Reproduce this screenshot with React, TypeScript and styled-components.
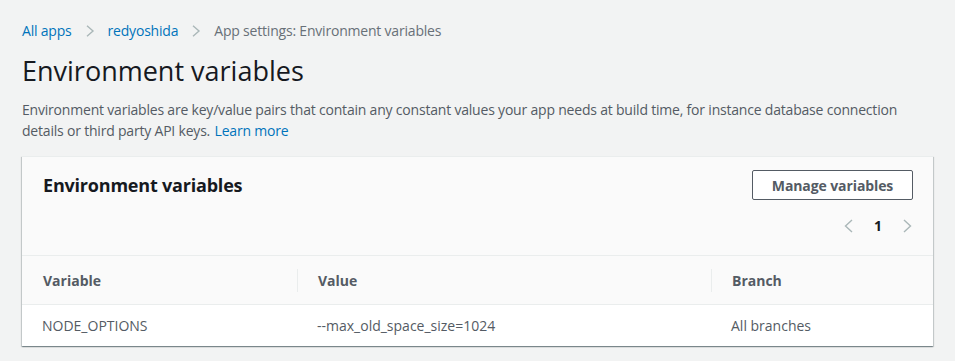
import React from "react";
import styled, { createGlobalStyle } from "styled-components";

const Global = createGlobalStyle`
  html, body { margin: 0; padding: 0; background: #f2f3f3; }
  body { font-family: "Open Sans", "Liberation Sans", Arial, sans-serif; -webkit-font-smoothing: antialiased; }
  * { box-sizing: border-box; }
`;

const Page = styled.div`
  padding: 21px 22px 14px 22px;
  background: #f2f3f3;
  min-height: 361px;
`;

const Breadcrumbs = styled.nav`
  display: flex;
  align-items: center;
  gap: 13px;
  font-size: 14px;
  line-height: 20px;
  height: 20px;
  letter-spacing: -0.2px;
`;

const Crumb = styled.a<{ $current?: boolean }>`
  color: ${(p) => (p.$current ? "#687078" : "#0073bb")};
  text-decoration: none;
`;

const Chev = styled.svg<{ $big?: boolean }>`
  width: 10px;
  height: ${(p) => (p.$big ? 14 : 12)}px;
  display: block;
  flex: none;
`;

const Title = styled.h1`
  margin: 12px 0 10px;
  font-size: 27px;
  line-height: 36px;
  font-weight: 400;
  color: #16191f;
`;

const Desc = styled.p`
  margin: 0;
  font-size: 14px;
  line-height: 21px;
  color: #545b64;
  letter-spacing: -0.2px;
`;

const Link = styled.a`
  color: #0073bb;
  text-decoration: none;
  margin-left: 1px;
`;

const Card = styled.section`
  margin-top: 15px;
  background: #ffffff;
  box-shadow: 0 1px 1px 0 rgba(0, 28, 36, 0.3), 1px 1px 1px 0 rgba(0, 28, 36, 0.15),
    -1px 1px 1px 0 rgba(0, 28, 36, 0.15);
  border-top: 1px solid #eaeded;
`;

const CardHeader = styled.div`
  background: #fafafa;
  padding: 13px 20px 19px 21px;
  display: grid;
  grid-template-columns: 1fr auto;
  row-gap: 16px;
  align-items: center;
`;

const CardTitle = styled.h2`
  margin: 0;
  font-size: 18px;
  line-height: 24px;
  font-weight: 700;
  color: #16191f;
  letter-spacing: -0.2px;
`;

const Button = styled.button`
  height: 30px;
  width: 161px;
  border: 1px solid #545b64;
  border-radius: 2px;
  background: #ffffff;
  color: #545b64;
  font-family: inherit;
  font-size: 14px;
  font-weight: 700;
  padding: 0;
  white-space: nowrap;
  letter-spacing: -0.1px;
  cursor: pointer;
`;

const Pagination = styled.div`
  grid-column: 2;
  justify-self: end;
  display: flex;
  align-items: center;
  gap: 20px;
  height: 20px;
  padding-right: 1px;
`;

const PageNum = styled.span`
  font-size: 14px;
  font-weight: 700;
  color: #16191f;
  line-height: 20px;
`;

const Table = styled.table`
  width: 100%;
  border-collapse: collapse;
  table-layout: fixed;
`;

const Th = styled.th<{ $sep?: boolean }>`
  position: relative;
  text-align: left;
  background: #fafafa;
  border-top: 1px solid #eaeded;
  height: 49px;
  padding: 0 20px 0 21px;
  font-size: 14px;
  font-weight: 700;
  color: #545b64;
  &::before {
    content: "";
    display: ${(p) => (p.$sep ? "block" : "none")};
    position: absolute;
    left: 0;
    top: 13px;
    bottom: 12px;
    width: 1px;
    background: #eaeded;
  }
`;

const Td = styled.td`
  border-top: 1px solid #eaeded;
  height: 41px;
  padding: 0 20px 0 20px;
  font-size: 14px;
  color: #545b64;
  background: #ffffff;
`;

const ChevronRight = ({ big }: { big?: boolean }) => (
  <Chev $big={big} viewBox={big ? "0 0 10 14" : "0 0 10 12"} fill="none">
    <path d={big ? "M2 1 L8.5 7 L2 13" : "M2 0.8 L8 6 L2 11.2"} stroke="#aab7b8" strokeWidth="1.4" />
  </Chev>
);

const ChevronLeft = ({ big }: { big?: boolean }) => (
  <Chev $big={big} viewBox={big ? "0 0 10 14" : "0 0 10 12"} fill="none">
    <path d={big ? "M8 1 L1.5 7 L8 13" : "M8 0.8 L2 6 L8 11.2"} stroke="#aab7b8" strokeWidth="1.4" />
  </Chev>
);

export default function App() {
  return (
    <>
      <Global />
      <Page>
        <Breadcrumbs>
          <Crumb href="#">All apps</Crumb>
          <ChevronRight />
          <Crumb href="#">redyoshida</Crumb>
          <ChevronRight />
          <Crumb $current>App settings: Environment variables</Crumb>
        </Breadcrumbs>
        <Title>Environment variables</Title>
        <Desc>
          Environment variables are key/value pairs that contain any constant values your app needs at build time, for
          instance database connection details or third party API keys. <Link href="#">Learn more</Link>
        </Desc>
        <Card>
          <CardHeader>
            <CardTitle>Environment variables</CardTitle>
            <Button>Manage variables</Button>
            <Pagination>
              <ChevronLeft big />
              <PageNum>1</PageNum>
              <ChevronRight big />
            </Pagination>
          </CardHeader>
          <Table>
            <colgroup>
              <col style={{ width: 275 }} />
              <col style={{ width: 414 }} />
              <col />
            </colgroup>
            <thead>
              <tr>
                <Th>Variable</Th>
                <Th $sep>Value</Th>
                <Th $sep>Branch</Th>
              </tr>
            </thead>
            <tbody>
              <tr>
                <Td>NODE_OPTIONS</Td>
                <Td>--max_old_space_size=1024</Td>
                <Td>All branches</Td>
              </tr>
            </tbody>
          </Table>
        </Card>
      </Page>
    </>
  );
}
